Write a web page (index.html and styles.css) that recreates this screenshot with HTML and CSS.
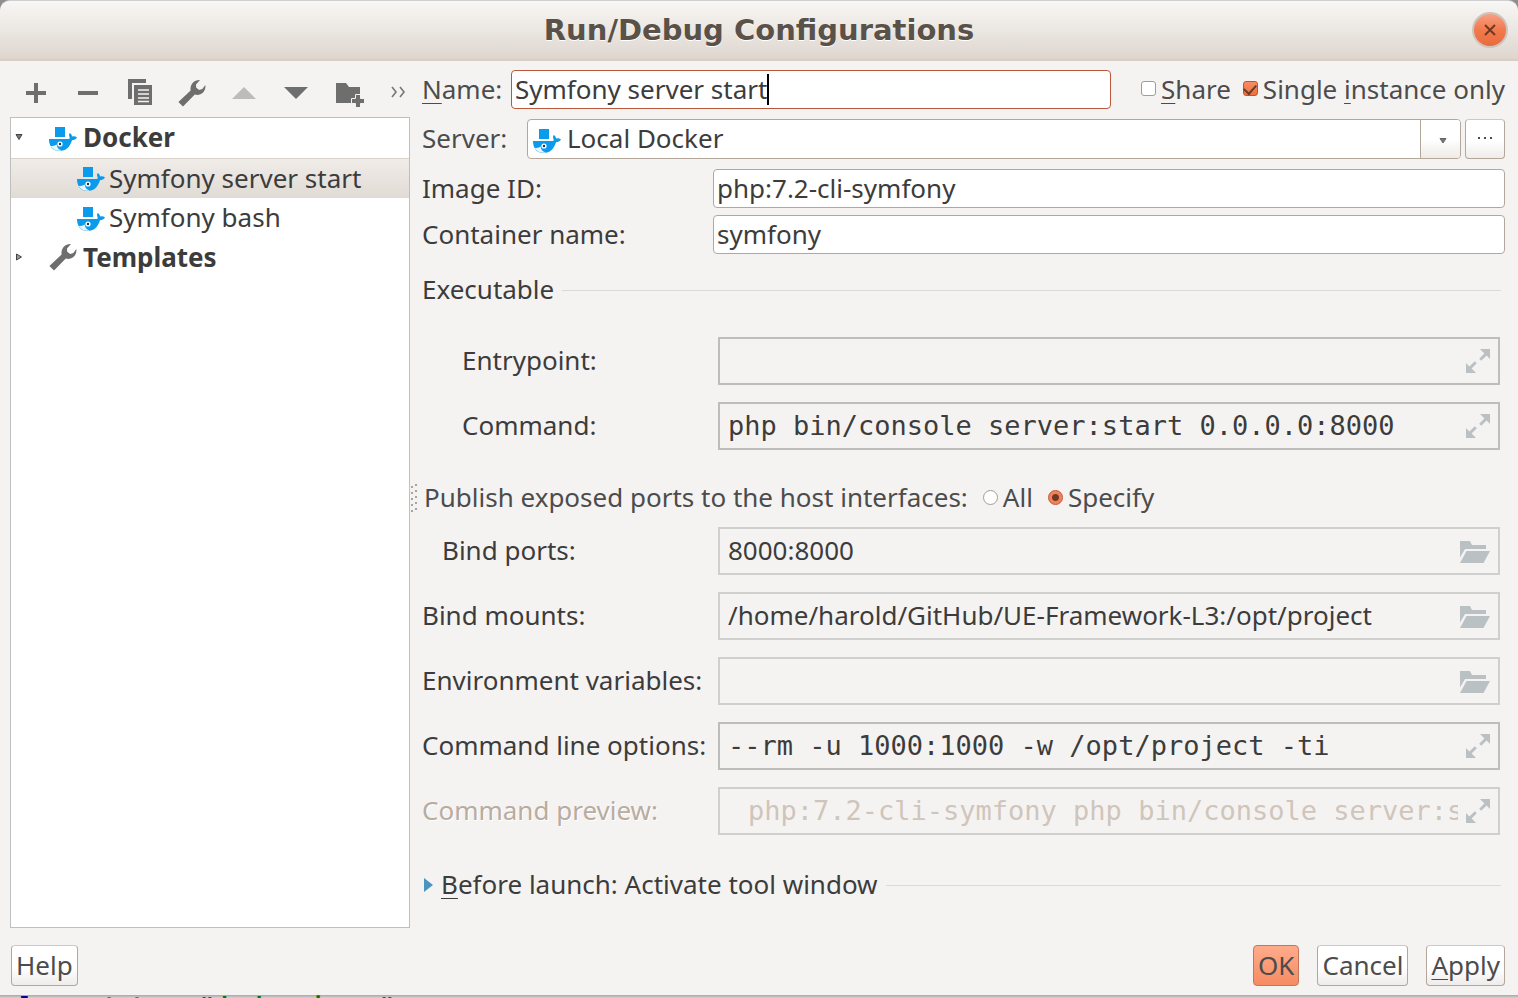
FILE: index.html
```html
<!DOCTYPE html>
<html lang="en">
<head>
<meta charset="utf-8">
<title>Run/Debug Configurations</title>
<link rel="stylesheet" href="styles.css">
</head>
<body>
<svg class="defs" aria-hidden="true">
  <symbol id="docker" viewBox="0 0 28 25">
    <path fill="#0a9bec" d="M6 0h10v10H6zM0 12h19.500c1.200 0 1.500-.7 1-2-.8-1.800-.5-3.200.4-4 1.300.7 2 2 2.200 3.600 1.500-.6 3.400-.3 4.900.9-1.200 1.900-3 2.600-5 2.700C20.800 20 17 24 10.500 24 4 24 0 19.500 0 12z"/>
    <path fill="#e9f5fc" d="M1.500 18.700c2.500.6 4.500.1 6.200-1.200.3 2.800 1.500 5 5 6C7.500 24.500 3.800 22.500 1.500 18.700z"/>
    <circle cx="11" cy="17" r="2.600" fill="#fff"/><circle cx="11" cy="17" r="1.200" fill="#17394d"/>
  </symbol>
  <symbol id="wrench" viewBox="0 0 28 28">
    <path fill="#6e6e6e" d="M5 27.600.4 23 12.600 11.600C11.700 6 15.500.6 22 .9l-4 4.600.2 3.200 3 2.300 3.200-1.100L27.300 6c1 6.300-4.300 11.300-10.500 9.600z"/>
  </symbol>
  <symbol id="expand" viewBox="0 0 24 24">
    <path fill="#bac1c4" d="M14 0h10v10l-3.400-3.400-5.400 5.200-2-2 5.200-5.400zM0 14l3.400 3.400 5.400-5.200 2 2-5.200 5.400L10 24H0z"/>
  </symbol>
  <symbol id="folder" viewBox="0 0 30 22">
    <path fill="#bac1c4" d="M0 0h10l2 4h14v4H5L0 16.500zM6.500 10H30l-6.500 12H0z"/>
  </symbol>
</svg>
<div class="dialog">
  <header class="titlebar">
    <h1>Run/Debug Configurations</h1>
    <button class="close" type="button" aria-label="Close"><svg viewBox="0 0 12 12"><path d="M1 1l10 10M11 1L1 11" stroke="#6e3a25" stroke-width="2"/></svg></button>
  </header>
  <form class="body">
    <aside class="sidebar">
      <div class="toolbar">
        <button type="button" aria-label="Add"><svg viewBox="0 0 28 28"><path fill="#6e6e6e" d="M12 4h4v8h8v4h-8v8h-4v-8H4v-4h8z"/></svg></button>
        <button type="button" aria-label="Remove"><svg viewBox="0 0 28 28"><path fill="#6e6e6e" d="M4 12h20v4H4z"/></svg></button>
        <button type="button" aria-label="Copy"><svg viewBox="0 0 28 28"><path fill="#6e6e6e" d="M2 0h18v4H6v16H2z"/><path fill="#6e6e6e" d="M8 6h18v20H8z"/><path d="M12 11h11M12 15h11M12 19h11M12 22.500h11" stroke="#f5f3f2" stroke-width="1.500"/></svg></button>
        <button type="button" aria-label="Edit templates"><svg><use href="#wrench"/></svg></button>
        <button type="button" aria-label="Move up" disabled><svg viewBox="0 0 28 28"><path fill="#bcbcbb" d="M2 20L14 8l12 12z"/></svg></button>
        <button type="button" aria-label="Move down"><svg viewBox="0 0 28 28"><path fill="#6e6e6e" d="M2 8h24L14 20z"/></svg></button>
        <button type="button" aria-label="New folder"><svg viewBox="-2 0 28 28"><path fill="#6e6e6e" d="M0 4h10l3 4h11v8h-4v4h-5v4H0z"/><path fill="#6e6e6e" stroke="#f5f3f2" d="M19.500 15.500h5v4h4v5h-4v4h-5v-4h-4v-5h4z"/></svg></button>
        <button class="more" type="button" aria-label="More"><svg viewBox="0 0 16 12"><path d="M2 1l4 5-4 5M10 1l4 5-4 5" fill="none" stroke="#777" stroke-width="1.600"/></svg></button>
      </div>
      <ul class="tree">
        <li class="group"><svg class="twist" viewBox="0 0 8 8"><path d="M1 1.500h6L4 6.500z" fill="#777" stroke="#444"/></svg><svg class="ico"><use href="#docker"/></svg>Docker</li>
        <li class="leaf selected"><svg class="ico"><use href="#docker"/></svg>Symfony server start</li>
        <li class="leaf"><svg class="ico"><use href="#docker"/></svg>Symfony bash</li>
        <li class="group"><svg class="twist" viewBox="0 0 8 8"><path d="M1.500 1v6L6.500 4z" fill="#999" stroke="#444"/></svg><svg class="ico tall"><use href="#wrench"/></svg>Templates</li>
      </ul>
      <svg class="grip" viewBox="0 0 8 30"><path d="M2 3v27M6 1v27" stroke="#a5a5a5" stroke-width="2" stroke-dasharray="2 4"/></svg>
    </aside>
    <main class="settings">
      <div class="row name-row">
        <label for="name"><u>N</u>ame:</label>
        <span class="name-box"><input class="entry focused" id="name" type="text" value="Symfony server start"><i class="caret"></i></span>
        <label class="choice"><input type="checkbox"><span><u>S</u>hare</span></label>
        <label class="choice"><input type="checkbox" checked><span>Single <u>i</u>nstance only</span></label>
      </div>
      <div class="row server-row">
        <label for="server">Server:</label>
        <span class="combo">
          <select id="server"><option>Local Docker</option></select>
          <svg class="ico"><use href="#docker"/></svg>
          <span class="arrow"><svg viewBox="0 0 8 6"><path d="M1 .5h6L4 5z" fill="#777" stroke="#666"/></svg></span>
        </span>
        <button class="push dots" type="button" aria-label="Browse servers"><svg viewBox="0 0 16 2"><path d="M1 0h2v2H1zM7 0h2v2H7zM13 0h2v2h-2z" fill="#4c4c4c"/></svg></button>
      </div>
      <div class="row id-row dark"><label for="image">Image ID:</label><input class="entry" id="image" type="text" value="php:7.2-cli-symfony"></div>
      <div class="row id-row dark"><label for="container">Container name:</label><input class="entry" id="container" type="text" value="symfony"></div>
      <h2 class="rule"><span>Executable</span></h2>
      <div class="fields">
        <div class="field in2"><label for="entry">Entrypoint:</label><span class="box"><input class="mono" id="entry" type="text"><button type="button" aria-label="Expand"><svg class="exp"><use href="#expand"/></svg></button></span></div>
        <div class="field in2"><label for="cmd">Command:</label><span class="box"><input class="mono" id="cmd" type="text" value="php bin/console server:start 0.0.0.0:8000"><button type="button" aria-label="Expand"><svg class="exp"><use href="#expand"/></svg></button></span></div>
      </div>
      <div class="publish" role="radiogroup" aria-labelledby="pub">
        <span id="pub">Publish exposed ports to the host interfaces:</span>
        <label class="choice"><input type="radio" name="ports"><span>All</span></label>
        <label class="choice"><input type="radio" name="ports" checked><span>Specify</span></label>
      </div>
      <div class="fields">
        <div class="field in1"><label for="bports">Bind ports:</label><span class="box light"><input id="bports" type="text" value="8000:8000"><button type="button" aria-label="Browse"><svg class="fold"><use href="#folder"/></svg></button></span></div>
        <div class="field"><label for="mounts">Bind mounts:</label><span class="box light"><input id="mounts" type="text" value="/home/harold/GitHub/UE-Framework-L3:/opt/project"><button type="button" aria-label="Browse"><svg class="fold"><use href="#folder"/></svg></button></span></div>
        <div class="field"><label for="env">Environment variables:</label><span class="box light"><input id="env" type="text"><button type="button" aria-label="Browse"><svg class="fold"><use href="#folder"/></svg></button></span></div>
        <div class="field"><label for="opts">Command line options:</label><span class="box"><input class="mono" id="opts" type="text" value="--rm -u 1000:1000 -w /opt/project -ti"><button type="button" aria-label="Expand"><svg class="exp"><use href="#expand"/></svg></button></span></div>
        <div class="field off"><label for="preview">Command preview:</label><span class="box light"><input class="mono" id="preview" type="text" disabled value="php:7.2-cli-symfony php bin/console server:start 0.0.0.0:8000"><button type="button" aria-label="Expand"><svg class="exp"><use href="#expand"/></svg></button></span></div>
      </div>
      <h2 class="rule launch"><svg viewBox="0 0 9 14"><path d="M0 0l9 7-9 7z" fill="#4a94c0"/></svg><span><u>B</u>efore launch: Activate tool window</span></h2>
    </main>
  </form>
  <footer class="actions">
    <button class="push help" type="button">Help</button>
    <button class="push ok" type="button">OK</button>
    <button class="push" type="button">Cancel</button>
    <button class="push" type="button"><u>A</u>pply</button>
  </footer>
</div>
<div class="behind"><code><b>l</b>    <i>state</i> = <em>"docker-image"</em></code></div>
</body>
</html>
```
FILE: styles.css
```css
* { box-sizing: border-box; }
body {
  margin: 0;
  height: 100vh;
  overflow: hidden;
  display: flex;
  flex-direction: column;
  background: #8e8e8e;
  color: #4c4c4c;
  font: 26px/32px "Noto Sans", "Open Sans", sans-serif;
}
.defs { display: none; }
svg { display: block; flex: none; }
button, input, select { font: inherit; color: inherit; margin: 0; }
button { border: 0; background: none; padding: 0; }
u { text-decoration-thickness: 1px; text-underline-offset: 4px; text-decoration-skip-ink: none; }

.dialog {
  flex: 1;
  min-height: 0;
  display: flex;
  flex-direction: column;
  background: #f5f3f2;
  border-top: 1px solid #cfcfcf;
  border-radius: 10px 10px 0 0;
}
.titlebar {
  height: 60px;
  flex: none;
  display: grid;
  grid-template-columns: 46px 1fr 46px;
  align-items: center;
  border-bottom: 2px solid #dacdc5;
  border-radius: 10px 10px 0 0;
  background: linear-gradient(#f8f7f5, #ebe7e2 50%, #dfd5cf);
}
h1 {
  grid-column: 2;
  margin: 0;
  text-align: center;
  font: bold 29px/32px "DejaVu Sans", sans-serif;
  color: #5a5149;
  text-shadow: 0 1px 0 #fff;
}
.close {
  width: 36px;
  height: 36px;
  display: grid;
  place-items: center;
  border: 2px solid #cdc4bc;
  border-radius: 50%;
  background: linear-gradient(#f7a184, #f1794c 50%, #ea6c3d);
}
.close svg { width: 12px; height: 12px; }

.body { flex: 1; min-height: 0; display: flex; }
.sidebar {
  position: relative;
  width: 400px;
  margin-left: 10px;
  flex: none;
  display: flex;
  flex-direction: column;
}
.toolbar { display: flex; height: 56px; padding-top: 8px; }
.toolbar button { width: 52px; display: grid; place-items: center; }
.toolbar svg { width: 28px; height: 28px; overflow: visible; }
.toolbar .more { flex: 1; padding: 0 0 2px 12px; }
.toolbar .more svg { width: 16px; height: 12px; }
.tree {
  flex: 1;
  margin: 0;
  padding: 0;
  list-style: none;
  border: 1px solid #bfbfbf;
  background: #fff;
  color: #3c3c3c;
}
.tree li { height: 40px; display: flex; align-items: center; padding-bottom: 2px; }
.group { font-weight: bold; padding-left: 4px; gap: 6px; }
.twist { width: 8px; height: 8px; margin-right: 20px; }
.leaf { padding-left: 66px; gap: 4px; }
.ico { width: 28px; height: 25px; }
.tree .ico { margin-top: 4px; }
.tree .ico.tall { height: 28px; margin-top: 0; }
.selected {
  border-top: 1px solid #d8d2cb;
  background: linear-gradient(#f0ece8, #e1dbd5);
}
.grip {
  position: absolute;
  right: -8px;
  top: 422px;
  width: 8px;
  height: 30px;
}

.settings { flex: 1; min-width: 0; padding: 9px 13px 0 12px; }
.settings label, .rule span { padding-bottom: 2px; }
.row { display: flex; align-items: center; }
.dark, .rule, .field { color: #3c3c3c; }
.name-row { margin-bottom: 10px; }
.name-row > label:first-child { width: 89px; }
.name-box { position: relative; flex: 1; display: flex; margin-right: 30px; }
.entry {
  flex: 1;
  min-width: 0;
  height: 39px;
  padding: 0 3px 2px;
  border: 1px solid #b3a79c;
  border-radius: 4px;
  background: #fff;
  color: #3c3c3c;
}
.entry.focused { border-color: #b9583a; outline: 0; }
.caret { position: absolute; left: 256px; top: 4px; width: 2px; height: 31px; background: #000; }
.choice { display: flex; align-items: center; gap: 5px; }
.choice + .choice { margin-left: 12px; }
.choice input {
  appearance: none;
  width: 15px;
  height: 15px;
  border: 1px solid #a79b90;
  border-radius: 3px;
  background: #fff;
}
.choice input[type="radio"] { border-radius: 50%; }
.choice input[type="checkbox"]:checked {
  border-color: #c4532c;
  background: linear-gradient(#f78d63, #ee7140);
  display: grid;
  place-items: center;
}
.choice input[type="checkbox"]:checked::before {
  content: "";
  width: 6px;
  height: 10px;
  margin-bottom: 3px;
  border: solid #6e3a25;
  border-width: 0 2px 2px 0;
  transform: rotate(42deg);
}
.choice input[type="radio"]:checked {
  border-color: #b9583a;
  background: radial-gradient(circle, #6e3a25 3px, #f4815a 4px);
}
.server-row { margin-bottom: 10px; }
.server-row > label { width: 105px; }
.combo { position: relative; flex: 1; display: flex; margin-right: 4px; }
.combo select {
  appearance: none;
  flex: 1;
  height: 40px;
  padding: 0 39px 2px;
  border: 1px solid #b3a79c;
  border-radius: 4px;
  background: #fff;
  color: #3c3c3c;
}
.combo .ico { position: absolute; left: 6px; top: 10px; }
.arrow {
  position: absolute;
  right: 1px;
  top: 1px;
  bottom: 1px;
  width: 40px;
  display: grid;
  place-items: center;
  padding: 4px 0 0 4px;
  border-left: 1px solid #b3a79c;
  border-radius: 0 3px 3px 0;
  background: linear-gradient(#fff 50%, #eeebe8);
  pointer-events: none;
}
.arrow svg { width: 8px; height: 6px; }
.push {
  height: 41px;
  padding: 0 4px 2px;
  border: 1px solid #b3a79c;
  border-top-color: #cfc8c1;
  border-radius: 4px;
  background: linear-gradient(#fff 55%, #efecea);
}
.dots { width: 40px; height: 40px; display: grid; place-items: center; }
.dots svg { width: 16px; height: 2px; }
.id-row { margin-bottom: 7px; }
.id-row label { width: 291px; }

.rule {
  display: flex;
  align-items: center;
  gap: 8px;
  height: 32px;
  margin: 20px 4px 31px 0;
  font-size: 26px;
  font-weight: normal;
}
.rule::after { content: ""; flex: 1; height: 1px; background: #dcdad8; }
.fields { display: grid; gap: 17px; margin-right: 5px; }
.field { display: grid; grid-template-columns: 296px 1fr; align-items: center; }
.in1 label { padding-left: 20px; }
.in2 label { padding-left: 40px; }
.box { display: flex; align-items: center; min-width: 0; height: 48px; padding: 0 8px; border: 2px solid #bdbdbd; }
.box.light { border-color: #cfcfcd; }
.box input { flex: 1; min-width: 0; height: 40px; padding: 0 0 2px; border: 0; background: none; outline: 0; }
.box button { width: 32px; display: flex; justify-content: flex-end; }
.box .mono { font: 27px/32px "DejaVu Sans Mono", monospace; }
.exp { width: 24px; height: 24px; }
.fold { width: 30px; height: 22px; margin-top: 2px; }
.off { color: #b8aca1; }
.off label { text-shadow: 1px 1px 0 #fff; }
.off input { color: #cfc5bb; padding-left: 20px; }
.publish { display: flex; align-items: flex-start; gap: 15px; height: 77px; padding: 31px 0 0 2px; }
.publish .choice + .choice { margin-left: 0; }
.rule.launch { margin: 34px 4px 0 2px; }
.launch svg { width: 9px; height: 14px; }

.actions { display: flex; gap: 18px; flex: none; padding: 17px 13px 9px 11px; }
.help { margin-right: auto; }
.ok { border-color: #c4765a; background: linear-gradient(#ffab8b, #f58c64); }

.behind { flex: none; height: 3px; overflow: hidden; background: linear-gradient(#a6a8a8, #d2d4d4); }
.behind code { display: block; padding-left: 20px; white-space: pre; font: bold 23px/23px "DejaVu Sans Mono", monospace; color: #000; }
.behind b, .behind i { font-style: normal; color: #00009a; }
.behind em { font-style: normal; color: #007a00; }
```
